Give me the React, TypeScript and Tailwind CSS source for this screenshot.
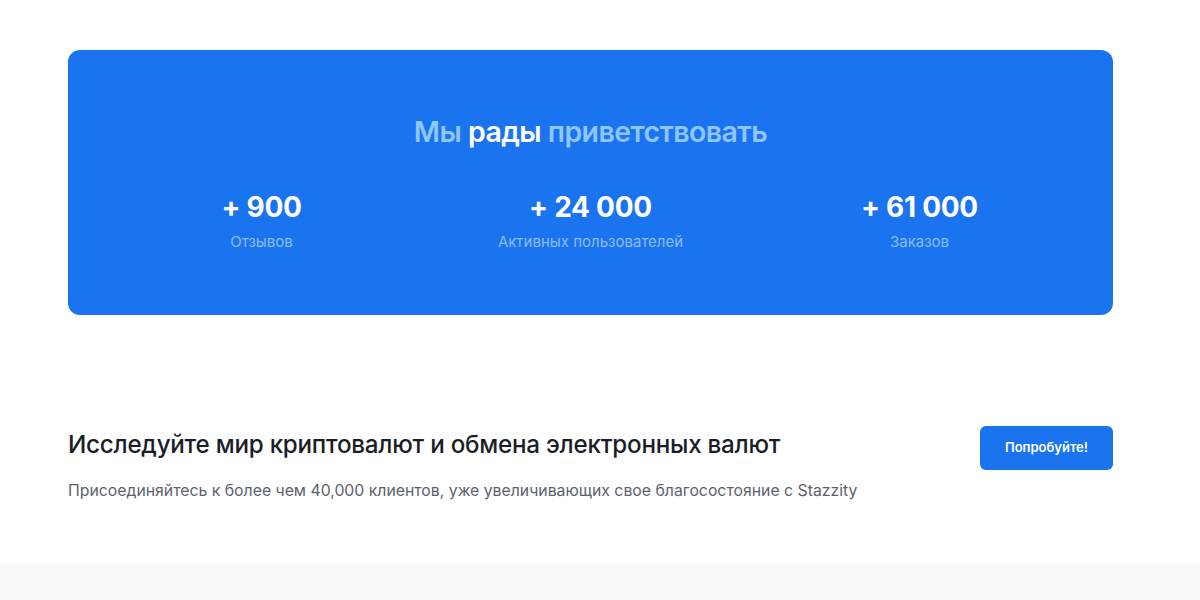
export default function App() {
  const stats = [
    { value: "+ 900", label: "Отзывов" },
    { value: "+ 24 000", label: "Активных пользователей" },
    { value: "+ 61 000", label: "Заказов" },
  ]

  return (
    <div className="min-h-[600px] bg-white font-['Inter',sans-serif] flex flex-col">
      <section className="pl-[68px] pr-[87px] pt-[50px]">
        {/* Stats banner */}
        <div className="bg-[#1a73ef] rounded-xl h-[265px] px-[29px] pt-[112px] relative flex flex-col">
          <h2 className="absolute left-0 right-0 top-[61px] text-center text-[28.5px] font-semibold tracking-[-0.02em] text-[#8fc6ff]">
            Мы <span className="text-white">рады</span> приветствовать
          </h2>
          <div className="grid grid-cols-3 mt-[27px]">
            {stats.map((s) => (
              <div key={s.label} className="flex flex-col items-center">
                <span className="text-[28px] leading-[36px] font-bold text-white tracking-[-0.01em]">{s.value}</span>
                <span className="mt-[6px] text-[15px] text-[#8cbdf5]">{s.label}</span>
              </div>
            ))}
          </div>
        </div>
      </section>

      <section className="pl-[68px] pr-[87px] pt-[111px] pb-[60px] flex justify-between items-start">
        <div>
          <h3 className="text-[24.2px] leading-[38px] font-medium text-[#1a1e28] tracking-[-0.01em]">
            Исследуйте мир криптовалют и обмена электронных валют
          </h3>
          <p className="mt-[15px] text-[15.8px] text-[#5b6270]">
            Присоединяйтесь к более чем 40,000 клиентов, уже увеличивающих свое благосостояние с Stazzity
          </p>
        </div>
        <button className="w-[133px] h-[44px] rounded-md bg-[#1a73ef] text-white text-[13px] font-semibold">
          Попробуйте!
        </button>
      </section>

      <div className="flex-1 bg-[#f8f9fc]" />
    </div>
  )
}
